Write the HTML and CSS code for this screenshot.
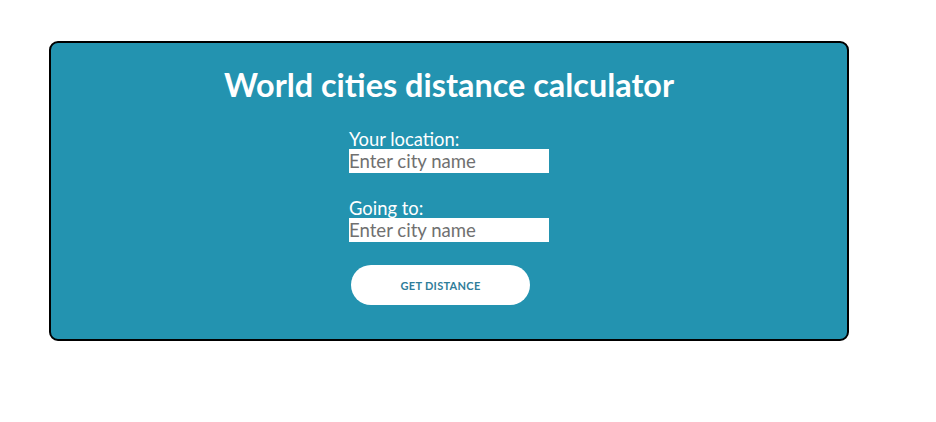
FILE: index.html
```html
<!DOCTYPE html>
<html>
<head>
<meta charset="utf-8">
<link rel="stylesheet" href="styles.css">
</head>
<body>
<div class="card">
  <h1 class="title">World cities distance calculator</h1>
  <form class="form">
    <label class="label" for="from">Your location:</label>
    <input class="city" id="from" type="text" placeholder="Enter city name">
    <label class="label second" for="to">Going to:</label>
    <input class="city" id="to" type="text" placeholder="Enter city name">
    <button class="btn" type="button">GET DISTANCE</button>
  </form>
</div>
</body>
</html>
```
FILE: styles.css
```css
html, body {
  margin: 0;
  padding: 0;
  background: #ffffff;
}
body {
  padding: 41px 0 0 49px;
  font-family: "Lato", "Open Sans", sans-serif;
}
.card {
  box-sizing: border-box;
  width: 800px;
  height: 300px;
  background: #2393b0;
  border: 2px solid #000;
  border-radius: 9px;
  display: flex;
  flex-direction: column;
  align-items: center;
}
.title {
  margin: 22px 0 0 0;
  color: #fff;
  font-size: 32.4px;
  font-weight: 700;
  line-height: 40px;
}
.form {
  width: 200px;
  display: flex;
  flex-direction: column;
  align-items: flex-start;
  margin-top: 24px;
}
.label {
  color: #fff;
  font-size: 18.4px;
  line-height: 20px;
}
.label.second {
  margin-top: 25px;
}
.city {
  box-sizing: border-box;
  width: 200px;
  height: 24px;
  border: none;
  padding: 0 1px 0 0;
  margin: 0;
  font-family: "Lato", sans-serif;
  font-size: 18.6px;
  color: #333;
  background: #fff;
  outline: none;
}
.city::placeholder {
  color: #707070;
}
.btn {
  margin: 23px 0 0 2px;
  width: 179px;
  height: 40px;
  border: none;
  border-radius: 20px;
  background: #fff;
  color: #2f7d9a;
  font-family: "Lato", sans-serif;
  font-size: 11px;
  font-weight: 700;
  letter-spacing: 0.3px;
}
```
